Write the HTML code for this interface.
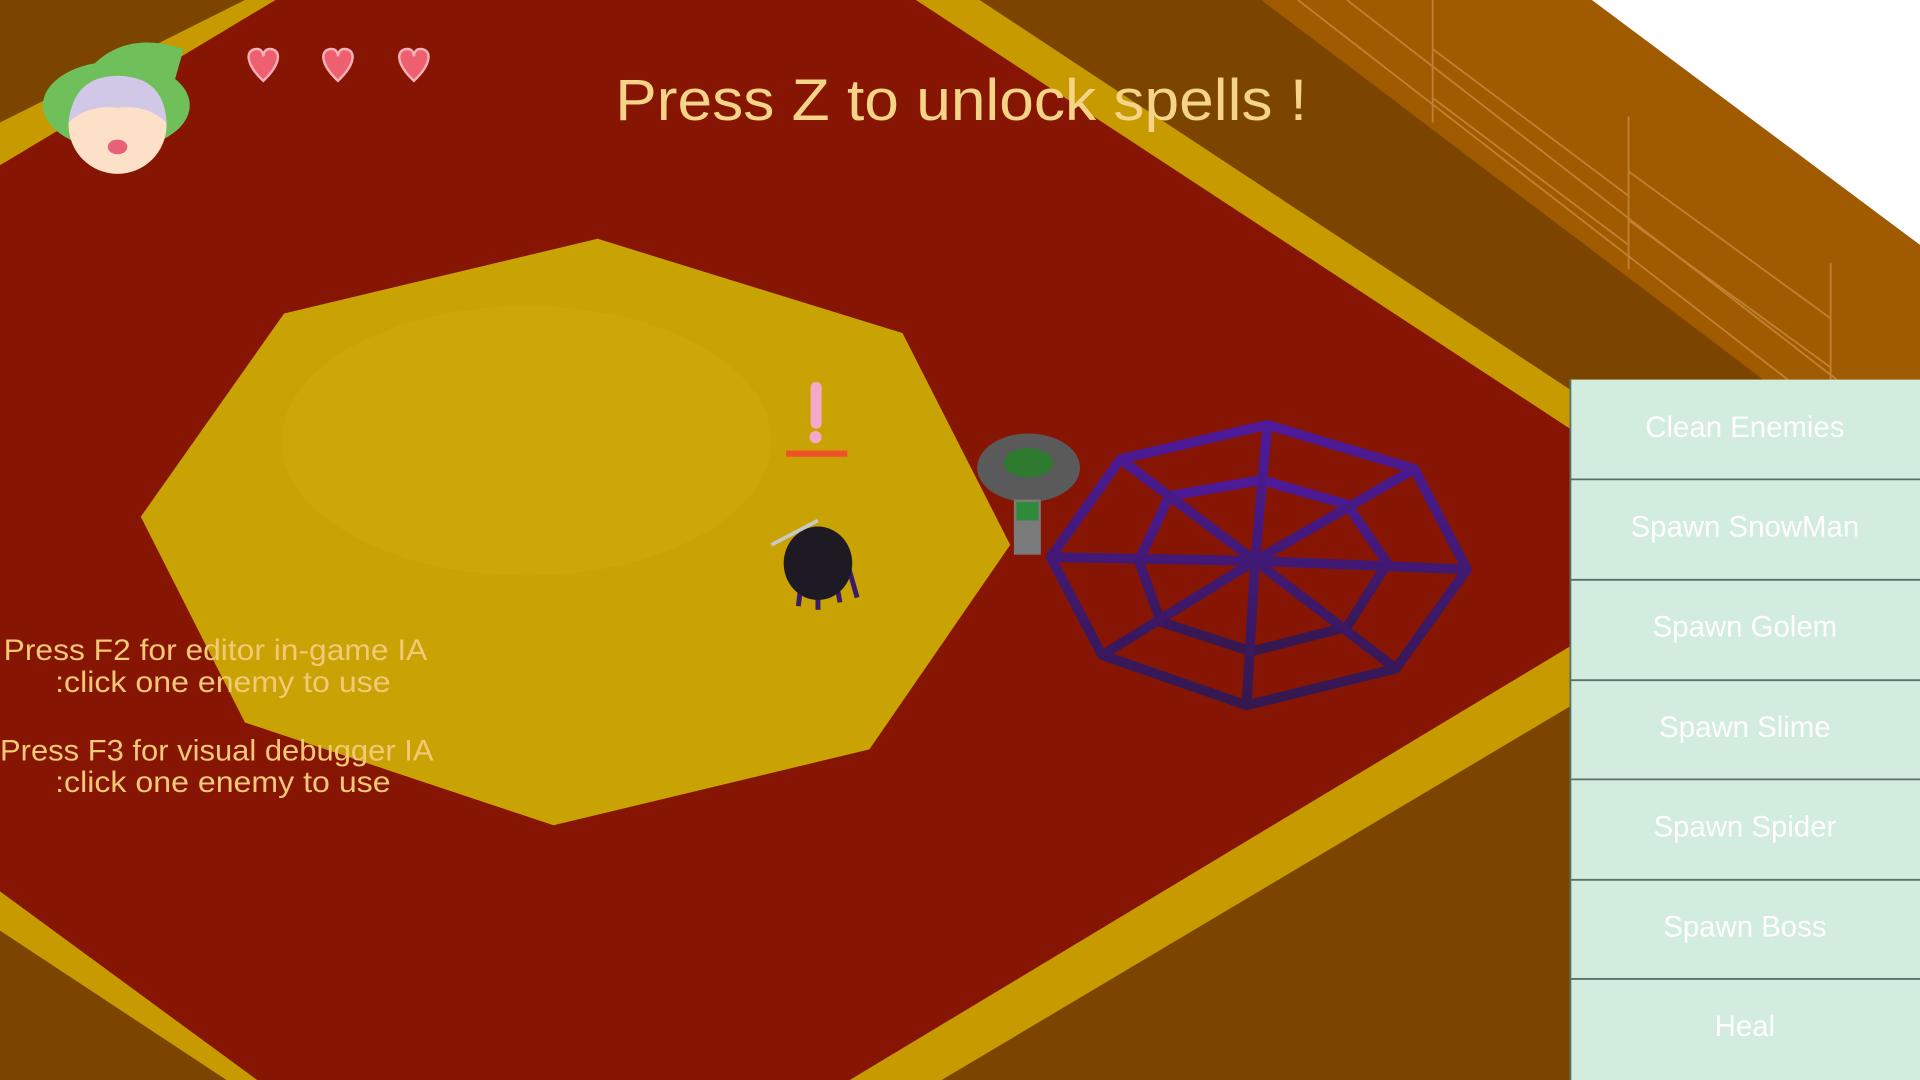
<!DOCTYPE html>
<html><head><meta charset="utf-8"><style>
html,body{margin:0;padding:0;background:#7a4300;overflow:hidden}
svg{display:block}
text{font-family:"Liberation Sans",sans-serif}
</style></head><body>
<svg width="1920" height="1080" viewBox="0 0 1568 882" preserveAspectRatio="none">
<defs><linearGradient id="wg" x1="0" y1="0" x2="0" y2="1"><stop offset="0" stop-color="#4e1a9a"/><stop offset="1" stop-color="#34184e"/></linearGradient></defs>
<rect width="1568" height="882" fill="#7b4500"/>
<polygon points="1030,0 1300,0 1568,200 1568,310 1440,310" fill="#a05b00"/>
<g stroke="#c98a40" stroke-width="1.5" fill="none" opacity="0.8">
<line x1="1060" y1="0" x2="1460" y2="310"/><line x1="1100" y1="0" x2="1500" y2="310"/>
<line x1="1170" y1="0" x2="1170" y2="100"/><line x1="1330" y1="95" x2="1330" y2="220"/><line x1="1495" y1="215" x2="1495" y2="310"/>
<line x1="1170" y1="40" x2="1330" y2="160"/><line x1="1170" y1="80" x2="1330" y2="200"/><line x1="1330" y1="140" x2="1495" y2="260"/><line x1="1330" y1="180" x2="1495" y2="300"/>
</g>
<polygon points="1300,0 1568,0 1568,200" fill="#ffffff"/>
<polygon points="0,100 200,0 800,0 1282,318 1282,577 769,882 185,882 0,760" fill="#c79a00"/>
<polygon points="0,135 225,0 748,0 1282,350 1282,528 694,882 210,882 0,728" fill="#861503"/>
<polygon points="488,195 737,272 825,445 710,612 452,674 200,590 115,422 232,256" fill="#c9a203"/>
<ellipse cx="430" cy="360" rx="200" ry="110" fill="#d6b414" opacity="0.3"/>
<g stroke="url(#wg)" stroke-width="8" fill="none" stroke-linejoin="round">
<polygon points="1035,347 1155,383 1198,465 1140,546 1018,576 900,535 858,455 915,375"/>
<polygon points="1030,392 1100,412 1133,460 1100,512 1022,532 948,508 930,458 955,405"/>
<path d="M1025,458 L1035,347 M1025,458 L1155,383 M1025,458 L1198,465 M1025,458 L1140,546 M1025,458 L1018,576 M1025,458 L900,535 M1025,458 L858,455 M1025,458 L915,375"/>
</g>
<ellipse cx="840" cy="382" rx="42" ry="28" fill="#5a5a5a"/>
<ellipse cx="840" cy="378" rx="20" ry="12" fill="#2e7a2e"/>
<rect x="828" y="408" width="22" height="45" fill="#7a7a7a"/>
<rect x="830" y="410" width="18" height="15" fill="#2f8a3a"/>
<g stroke="#3a1a6a" stroke-width="4"><line x1="655" y1="470" x2="652" y2="495"/><line x1="668" y1="475" x2="668" y2="498"/><line x1="682" y1="470" x2="686" y2="492"/><line x1="692" y1="460" x2="700" y2="488"/></g>
<ellipse cx="668" cy="460" rx="28" ry="30" fill="#1e1a24"/>
<line x1="630" y1="445" x2="668" y2="425" stroke="#c8c8c8" stroke-width="3"/>
<rect x="662" y="312" width="9" height="38" rx="4" fill="#f6a8c8"/>
<circle cx="666" cy="357" r="5" fill="#f6a8c8"/>
<rect x="642" y="368" width="50" height="5" fill="#f0502a"/>
<ellipse cx="95" cy="86" rx="60" ry="36" fill="#6fbf5a"/>
<path d="M60,75 Q90,20 150,40 L140,75 Z" fill="#6fbf5a"/>
<circle cx="96" cy="102" r="40" fill="#fde0c8"/>
<path d="M56,100 Q60,62 96,62 Q134,62 136,100 Q120,85 96,88 Q72,85 56,100Z" fill="#d0c8e6"/>
<ellipse cx="96" cy="120" rx="8" ry="6" fill="#e8607a"/>
<g fill="#ee6070" stroke="#f6b0b8" stroke-width="2">
<path d="M215,66 C200,52 200,40 210,40 C214,40 215,44 215,46 C215,44 216,40 220,40 C230,40 230,52 215,66Z"/>
<path d="M276,66 C261,52 261,40 271,40 C275,40 276,44 276,46 C276,44 277,40 281,40 C291,40 291,52 276,66Z"/>
<path d="M338,66 C323,52 323,40 333,40 C337,40 338,44 338,46 C338,44 339,40 343,40 C353,40 353,52 338,66Z"/>
</g>
<text x="785" y="98" font-size="48" fill="#f5d488" text-anchor="middle" textLength="565" lengthAdjust="spacingAndGlyphs">Press Z to unlock spells !</text>
<g font-size="24" fill="#f3c877" text-anchor="middle">
<text x="176" y="539" textLength="346" lengthAdjust="spacingAndGlyphs">Press F2 for editor in-game IA</text>
<text x="182" y="565" textLength="274" lengthAdjust="spacingAndGlyphs">:click one enemy to use</text>
<text x="177" y="621" textLength="354" lengthAdjust="spacingAndGlyphs">Press F3 for visual debugger IA</text>
<text x="182" y="647" textLength="274" lengthAdjust="spacingAndGlyphs">:click one enemy to use</text>
</g>
<rect x="1282" y="310" width="286" height="572" fill="#d2ecdd"/>
<g stroke="#5a7068" stroke-width="1.5">
<line x1="1282" y1="391.5" x2="1568" y2="391.5"/><line x1="1282" y1="473.5" x2="1568" y2="473.5"/>
<line x1="1282" y1="555.5" x2="1568" y2="555.5"/><line x1="1282" y1="636.5" x2="1568" y2="636.5"/>
<line x1="1282" y1="718.5" x2="1568" y2="718.5"/><line x1="1282" y1="799.5" x2="1568" y2="799.5"/>
<line x1="1282.5" y1="310" x2="1282.5" y2="882"/>
</g>
<g font-size="24" fill="#ffffff" text-anchor="middle">
<text x="1425" y="357">Clean Enemies</text>
<text x="1425" y="438">Spawn SnowMan</text>
<text x="1425" y="520">Spawn Golem</text>
<text x="1425" y="602">Spawn Slime</text>
<text x="1425" y="683">Spawn Spider</text>
<text x="1425" y="765">Spawn Boss</text>
<text x="1425" y="846">Heal</text>
</g>
</svg>
</body></html>
